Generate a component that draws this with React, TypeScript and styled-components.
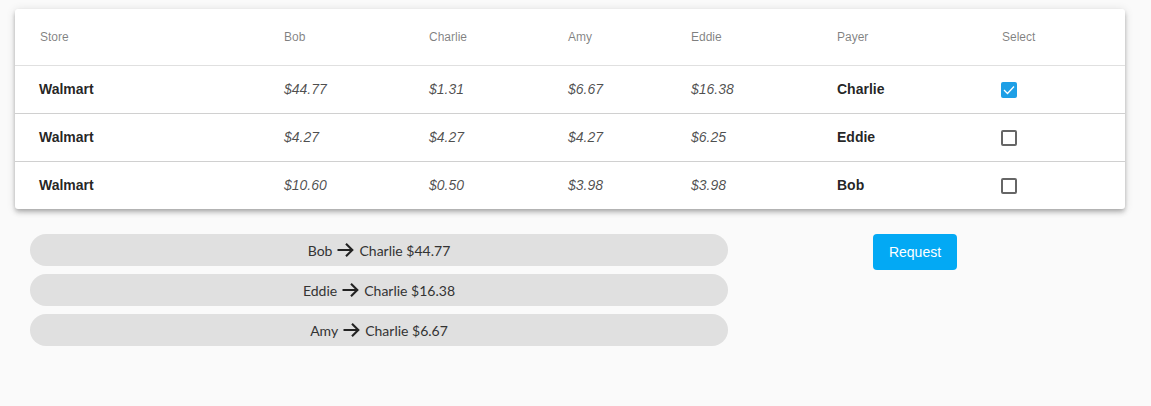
import React from "react";
import styled, { createGlobalStyle } from "styled-components";

const Global = createGlobalStyle`
  html, body { margin: 0; padding: 0; background: #fafafa; }
  body { font-family: "Liberation Sans", Arial, sans-serif; }
`;

const Page = styled.div`
  padding: 9px 26px 0 15px;
  width: 1110px;
`;

const Card = styled.div`
  background: #fff;
  border-radius: 3px;
  box-shadow: 0 2px 4px -1px rgba(0,0,0,0.2), 0 4px 5px 0 rgba(0,0,0,0.14), 0 1px 10px 0 rgba(0,0,0,0.12);
  overflow: hidden;
`;

const Table = styled.table`
  width: 100%;
  border-collapse: collapse;
  table-layout: fixed;
`;

const HeadCell = styled.th<{ $w: number }>`
  width: ${(p) => p.$w}px;
  height: 56px;
  padding: 0;
  text-align: left;
  font-size: 12px;
  font-weight: 400;
  color: rgba(0,0,0,0.5);
  border-bottom: 1px solid #e0e0e0;
  box-sizing: border-box;
  &:first-child { padding-left: 25px; }
`;

const Row = styled.tr`
  height: 48px;
  & + & td { border-top: 1px solid #d0d0d0; }
`;

const Cell = styled.td<{ $kind?: "bold" | "amount" }>`
  padding: 0;
  font-size: 14px;
  font-weight: ${(p) => (p.$kind === "bold" ? 700 : 400)};
  font-style: ${(p) => (p.$kind === "amount" ? "italic" : "normal")};
  color: ${(p) => (p.$kind === "amount" ? "rgba(0,0,0,0.7)" : "rgba(0,0,0,0.87)")};
  &:first-child { padding-left: 24px; }
`;

const Box = styled.span<{ $checked: boolean }>`
  display: inline-flex;
  align-items: center;
  justify-content: center;
  width: 16px;
  height: 16px;
  margin-left: -1px;
  margin-top: 2px;
  border-radius: 2px;
  box-sizing: border-box;
  border: ${(p) => (p.$checked ? "none" : "2px solid #666")};
  background: ${(p) => (p.$checked ? "#1e9fe6" : "transparent")};
  vertical-align: middle;
`;

const Lower = styled.div`
  display: flex;
  align-items: flex-start;
  margin-top: 25px;
  padding-left: 15px;
`;

const Pills = styled.div`
  display: flex;
  flex-direction: column;
  gap: 8px;
  width: 698px;
`;

const Pill = styled.div`
  height: 32px;
  border-radius: 16px;
  background: #e0e0e0;
  display: flex;
  align-items: center;
  justify-content: center;
  gap: 5px;
  font-family: Lato, "Open Sans", sans-serif;
  font-size: 14px;
  color: #333;
`;

const RequestButton = styled.button`
  margin-left: 145px;
  width: 84px;
  height: 36px;
  border: none;
  border-radius: 4px;
  background: #03a9f4;
  color: #fff;
  font-family: "Liberation Sans", Arial, sans-serif;
  font-size: 14px;
  cursor: pointer;
`;

const Arrow = () => (
  <svg width="17" height="14" viewBox="0 0 17 14" fill="none" stroke="#222" strokeWidth="2.1">
    <path d="M0.5 7 H15.5 M9 0.8 L15.3 7 L9 13.2" />
  </svg>
);

const Check = () => (
  <svg width="12" height="10" viewBox="0 0 12 10" fill="none" stroke="#fff" strokeWidth="1.3">
    <path d="M1 5 L4.5 8.5 L11 1.5" />
  </svg>
);

const cols = [
  { name: "Store", w: 269 },
  { name: "Bob", w: 145 },
  { name: "Charlie", w: 139 },
  { name: "Amy", w: 123 },
  { name: "Eddie", w: 146 },
  { name: "Payer", w: 165 },
  { name: "Select", w: 123 },
];

const rows = [
  { store: "Walmart", v: ["$44.77", "$1.31", "$6.67", "$16.38"], payer: "Charlie", checked: true },
  { store: "Walmart", v: ["$4.27", "$4.27", "$4.27", "$6.25"], payer: "Eddie", checked: false },
  { store: "Walmart", v: ["$10.60", "$0.50", "$3.98", "$3.98"], payer: "Bob", checked: false },
];

const transfers = [
  { from: "Bob", to: "Charlie", amt: "$44.77" },
  { from: "Eddie", to: "Charlie", amt: "$16.38" },
  { from: "Amy", to: "Charlie", amt: "$6.67" },
];

export default function App() {
  return (
    <>
      <Global />
      <Page>
        <Card>
          <Table>
            <thead>
              <tr>
                {cols.map((c) => (
                  <HeadCell key={c.name} $w={c.w}>{c.name}</HeadCell>
                ))}
              </tr>
            </thead>
            <tbody>
              {rows.map((r, i) => (
                <Row key={i}>
                  <Cell $kind="bold">{r.store}</Cell>
                  {r.v.map((x, j) => (
                    <Cell key={j} $kind="amount">{x}</Cell>
                  ))}
                  <Cell $kind="bold">{r.payer}</Cell>
                  <Cell>
                    <Box $checked={r.checked}>{r.checked && <Check />}</Box>
                  </Cell>
                </Row>
              ))}
            </tbody>
          </Table>
        </Card>
        <Lower>
          <Pills>
            {transfers.map((t) => (
              <Pill key={t.from}>
                <span>{t.from}</span>
                <Arrow />
                <span>{t.to} {t.amt}</span>
              </Pill>
            ))}
          </Pills>
          <RequestButton>Request</RequestButton>
        </Lower>
      </Page>
    </>
  );
}
